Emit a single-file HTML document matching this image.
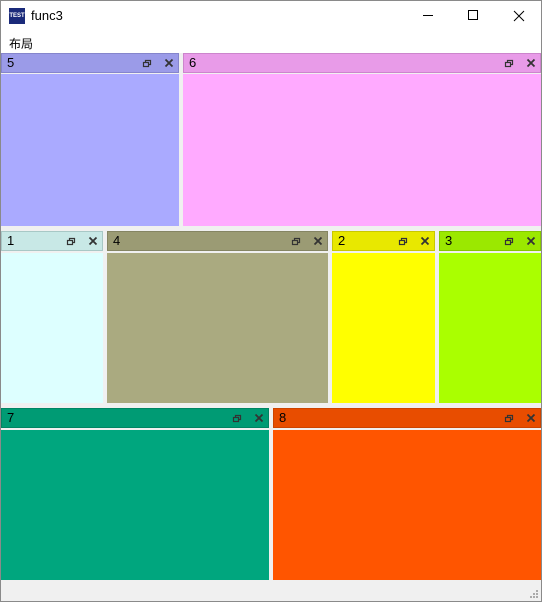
<!DOCTYPE html><html><head><style>
body{margin:0;width:542px;height:602px;overflow:hidden;font-family:"Liberation Sans","Noto Sans CJK SC",sans-serif;background:#f0f0f0;position:relative}
.win{position:absolute;left:0;top:0;width:540px;height:600px;border:1px solid #8a8a8a;background:#f0f0f0}
.title{position:absolute;left:0;top:0;width:540px;height:30px;background:#fff}
.menu{position:absolute;left:0;top:30px;width:540px;height:22px;background:#fff;font-size:12px}
.h{position:absolute;height:20px;box-sizing:border-box;border:1px solid;font-size:13px;line-height:18px;padding-left:5px;color:#000}
.c{position:absolute}
.ic{position:absolute;top:4px}
</style></head><body><div class="win">
<div class="title">
<div style="position:absolute;left:8px;top:7px;width:16px;height:16px;background:#1a2a7a;color:#fff;font-size:6px;font-weight:bold;line-height:16px;text-align:center">TEST</div>
<div style="position:absolute;left:30px;top:7px;font-size:13px">func3</div>
<svg style="position:absolute;left:410px;top:0" width="130" height="30"><path d="M12 14.5h10" stroke="#000"/><rect x="57.5" y="9.5" width="9" height="9" fill="none" stroke="#000"/><path d="M103 10l10 10M113 10l-10 10" stroke="#000"/></svg>
</div>
<div class="menu"><span style="position:absolute;left:8px;top:4px">布局</span></div>
</div>
<div id="p"></div>
<script>
var P=[["5",0,53,179,74,226,"#9b9be8","#8585cc","#aaaaff"],["6",183,53,542,74,226,"#e89be8","#cc85cc","#ffaaff"],
["1",0,231,103,253,403,"#c8e8e6","#a8c8c6","#ddffff"],["4",107,231,328,253,403,"#9b9b74","#858563","#aaaa80"],
["2",332,231,435,253,403,"#e8e800","#c8c800","#ffff00"],["3",439,231,542,253,403,"#9be800","#85c800","#aaff00"],
["7",0,408,269,430,580,"#009b74","#008563","#00a67e"],["8",273,408,542,430,580,"#e84d00","#cc4400","#ff5500"]];
var s="";P.forEach(function(a){var l=a[1],r=a[3];if(l==0)l=1;if(r==542)r=541;var w=r-l;
s+='<div class="h" style="left:'+l+'px;top:'+a[2]+'px;width:'+w+'px;background:'+a[6]+';border-color:'+a[7]+'">'+a[0]+
'<svg class="ic" style="left:'+(w-38)+'px" width="10" height="10"><rect x="1.5" y="4.5" width="5" height="4" fill="none" stroke="#333" stroke-width="1.2"/><path d="M3.5 4.5V2.5h5v4h-2" fill="none" stroke="#333" stroke-width="1.2"/></svg>'+
'<svg class="ic" style="left:'+(w-16)+'px" width="10" height="10"><path d="M1.5 1.5l7 7M8.5 1.5l-7 7" stroke="#333" stroke-width="1.8"/></svg></div>'+
'<div class="c" style="left:'+l+'px;top:'+a[4]+'px;width:'+w+'px;height:'+(a[5]-a[4])+'px;background:'+a[8]+'"></div>';});
document.getElementById("p").innerHTML=s;
</script>
<svg style="position:absolute;left:529px;top:589px" width="10" height="10" fill="#aaa"><rect x="7" y="1" width="2" height="2"/><rect x="4" y="4" width="2" height="2"/><rect x="7" y="4" width="2" height="2"/><rect x="1" y="7" width="2" height="2"/><rect x="4" y="7" width="2" height="2"/><rect x="7" y="7" width="2" height="2"/></svg>
</body></html>
